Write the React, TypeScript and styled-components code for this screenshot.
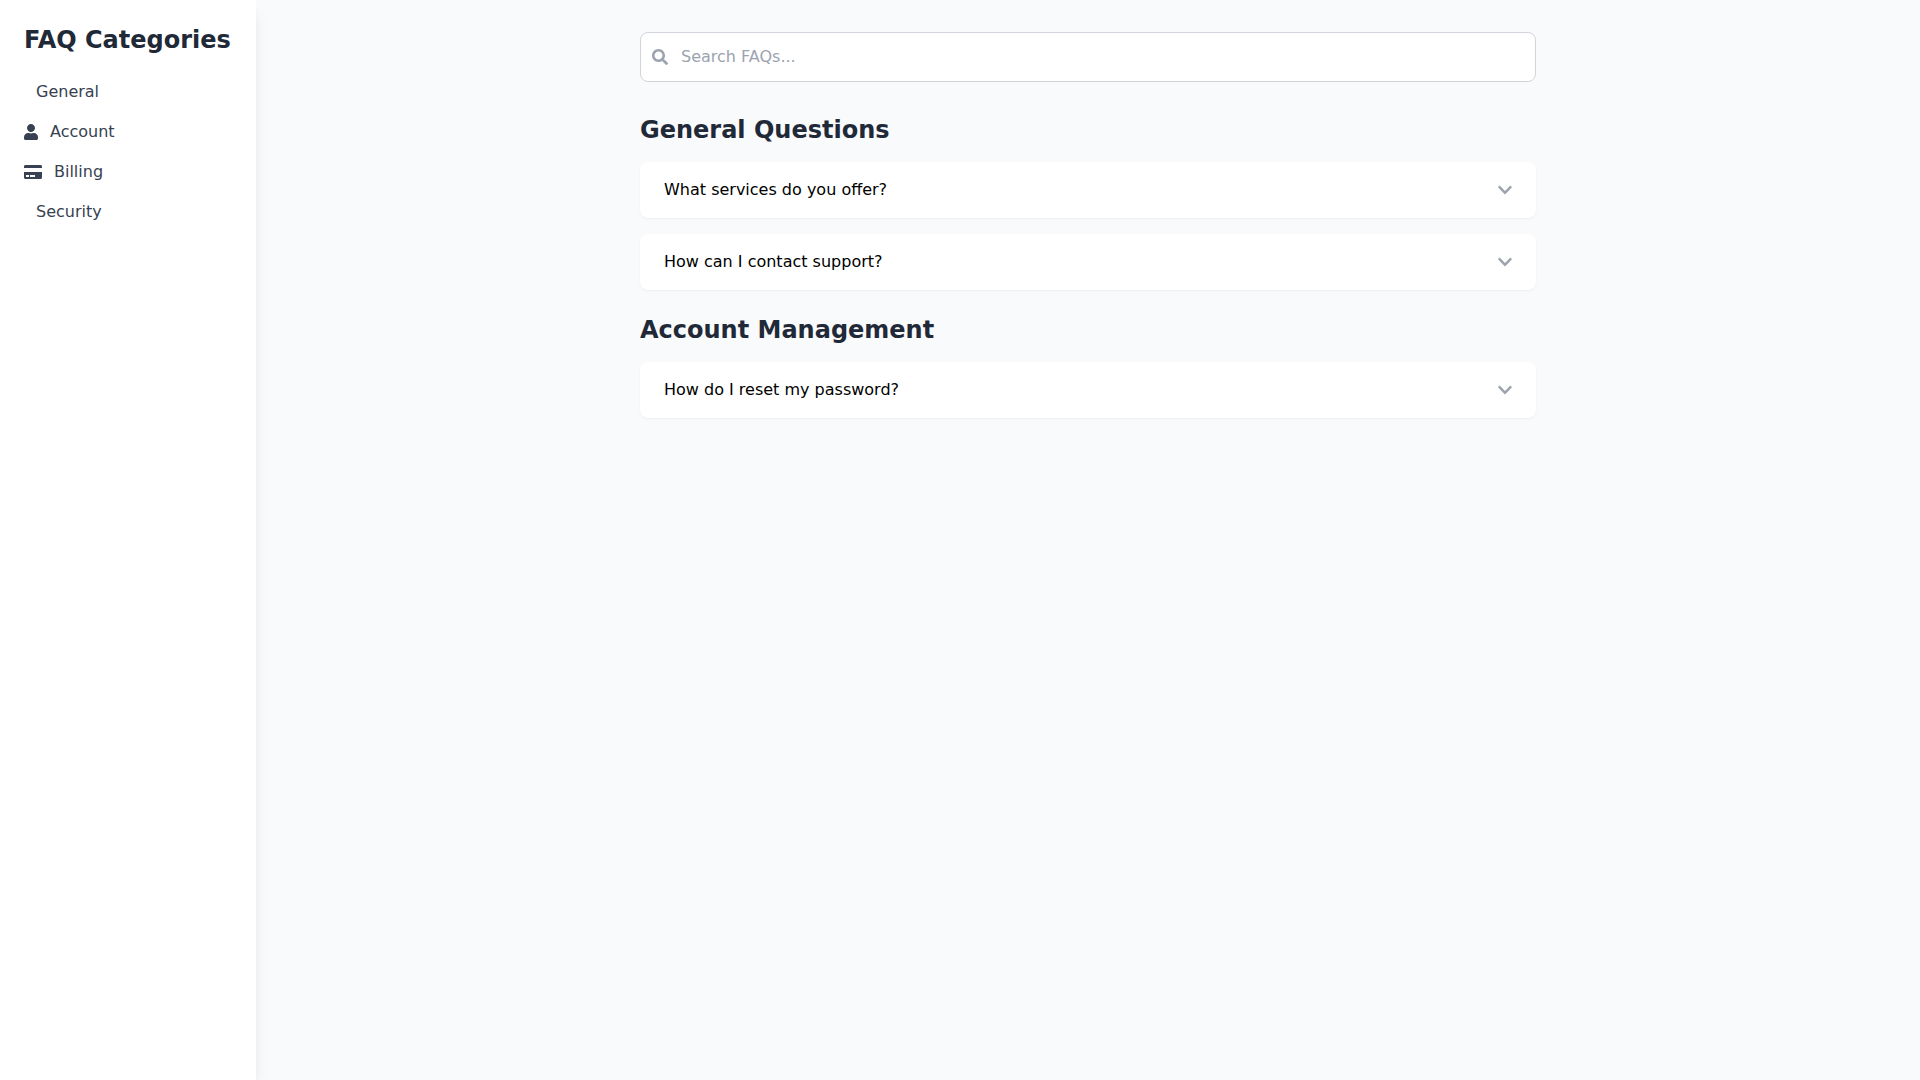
import React from "react";
import styled, { createGlobalStyle } from "styled-components";
import { FaUser, FaCreditCard, FaSearch, FaChevronDown } from "react-icons/fa";

const Global = createGlobalStyle`
  html, body { margin: 0; padding: 0; }
  body { font-family: "DejaVu Sans", sans-serif; background: #f9fafb; }
  * { box-sizing: border-box; }
`;

const Page = styled.div`
  display: flex;
  height: 100vh;
  background: #f9fafb;
`;

const Sidebar = styled.aside`
  width: 256px;
  flex-shrink: 0;
  padding: 24px;
  background: #fff;
  box-shadow: 0 10px 15px -3px rgba(0, 0, 0, 0.1), 0 4px 6px -4px rgba(0, 0, 0, 0.1);
`;

const SidebarTitle = styled.h1`
  margin: 0 0 16px;
  font-size: 24px;
  line-height: 32px;
  font-weight: 700;
  color: #1f2937;
  white-space: nowrap;
`;

const CategoryList = styled.nav`
  display: flex;
  flex-direction: column;
`;

const Category = styled.a`
  display: flex;
  align-items: center;
  gap: 12px;
  height: 40px;
  font-size: 16px;
  line-height: 24px;
  color: #374151;
`;

const EmptyIcon = styled.span`
  width: 0;
`;

const UserIcon = styled(FaUser)`
  width: 14px;
  height: 16px;
`;

const CardIcon = styled(FaCreditCard)`
  width: 18px;
  height: 16px;
`;

const Main = styled.main`
  flex: 1;
  padding: 32px;
`;

const Column = styled.div`
  width: 896px;
  margin: 0 auto;
`;

const SearchBox = styled.div`
  position: relative;
  margin-bottom: 32px;
`;

const SearchIcon = styled(FaSearch)`
  position: absolute;
  left: 12px;
  top: 17px;
  width: 16px;
  height: 16px;
  color: #9ca3af;
`;

const SearchInput = styled.input`
  display: block;
  width: 100%;
  padding: 12px 16px 12px 40px;
  border: 1px solid #d1d5db;
  border-radius: 8px;
  background: #fff;
  font-family: inherit;
  font-size: 16px;
  line-height: 24px;
  outline: none;

  &::placeholder {
    color: #9ca3af;
    opacity: 1;
  }
`;

const Section = styled.section`
  margin-bottom: 24px;
`;

const SectionTitle = styled.h2`
  margin: 0 0 16px;
  font-size: 24px;
  line-height: 32px;
  font-weight: 700;
  color: #1f2937;
`;

const Questions = styled.div`
  display: flex;
  flex-direction: column;
  gap: 16px;
`;

const Question = styled.div`
  display: flex;
  align-items: center;
  justify-content: space-between;
  height: 56px;
  padding: 0 24px;
  border-radius: 8px;
  background: #fff;
  box-shadow: 0 1px 2px 0 rgba(0, 0, 0, 0.05);
  font-size: 16px;
  line-height: 24px;
  color: #000;
`;

const Chevron = styled(FaChevronDown)`
  width: 14px;
  height: 16px;
  color: #9ca3af;
`;

const sections = [
  { title: "General Questions", questions: ["What services do you offer?", "How can I contact support?"] },
  { title: "Account Management", questions: ["How do I reset my password?"] },
];

export default function App() {
  return (
    <Page>
      <Global />
      <Sidebar>
        <SidebarTitle>FAQ Categories</SidebarTitle>
        <CategoryList>
          <Category><EmptyIcon />General</Category>
          <Category><UserIcon />Account</Category>
          <Category><CardIcon />Billing</Category>
          <Category><EmptyIcon />Security</Category>
        </CategoryList>
      </Sidebar>
      <Main>
        <Column>
          <SearchBox>
            <SearchIcon />
            <SearchInput placeholder="Search FAQs..." />
          </SearchBox>
          {sections.map((s) => (
            <Section key={s.title}>
              <SectionTitle>{s.title}</SectionTitle>
              <Questions>
                {s.questions.map((q) => (
                  <Question key={q}>
                    {q}
                    <Chevron />
                  </Question>
                ))}
              </Questions>
            </Section>
          ))}
        </Column>
      </Main>
    </Page>
  );
}
